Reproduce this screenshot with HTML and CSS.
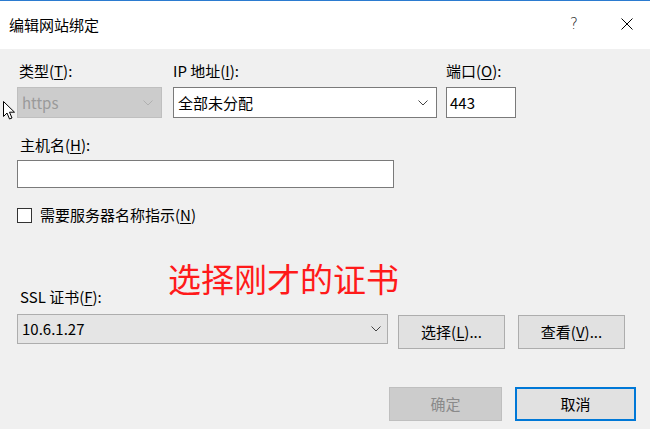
FILE: index.html
```html
<!DOCTYPE html>
<html lang="zh-CN">
<head>
<meta charset="utf-8">
<title>编辑网站绑定</title>
<link rel="stylesheet" href="styles.css">
</head>
<body>
<div class="window">
  <div class="titlebar">
    <span class="title">编辑网站绑定</span>
    <span class="help">?</span>
    <span class="close">
      <svg width="12" height="12" viewBox="0 0 12 12"><path d="M0.5 0.5 L11.5 11.5 M11.5 0.5 L0.5 11.5" stroke="#000" stroke-width="1" fill="none"/></svg>
    </span>
  </div>
  <div class="content">
    <div class="row1">
      <div class="col col-type">
        <div class="label">类型(<u>T</u>):</div>
        <div class="combo disabled"><span class="val">https</span><svg class="chev" width="10" height="6" viewBox="0 0 10 6"><path d="M0.5 0.5 L5 5 L9.5 0.5" stroke="#b0b0b0" fill="none"/></svg></div>
      </div>
      <div class="col col-ip">
        <div class="label">IP 地址(<u>I</u>):</div>
        <div class="combo editable"><span class="val">全部未分配</span><svg class="chev" width="10" height="6" viewBox="0 0 10 6"><path d="M0.5 0.5 L5 5 L9.5 0.5" stroke="#444" fill="none"/></svg></div>
      </div>
      <div class="col col-port">
        <div class="label">端口(<u>O</u>):</div>
        <div class="textbox port"><span class="val">443</span></div>
      </div>
    </div>
    <div class="label host-label">主机名(<u>H</u>):</div>
    <div class="textbox host"></div>
    <div class="check-row">
      <span class="checkbox"></span>
      <span class="check-text">需要服务器名称指示(<u>N</u>)</span>
    </div>
    <div class="label ssl-label">SSL 证书(<u>F</u>):</div>
    <div class="ssl-row">
      <div class="combo ssl"><span class="val">10.6.1.27</span><svg class="chev" width="10" height="6" viewBox="0 0 10 6"><path d="M0.5 0.5 L5 5 L9.5 0.5" stroke="#444" fill="none"/></svg></div>
      <button class="btn btn-select">选择(<u>L</u>)...</button>
      <button class="btn btn-view">查看(<u>V</u>)...</button>
    </div>
    <div class="footer">
      <button class="btn btn-ok" disabled>确定</button>
      <button class="btn btn-cancel">取消</button>
    </div>
  </div>
  <div class="annotation">选择刚才的证书</div>
  <svg class="cursor" width="14" height="20" viewBox="0 0 14 20"><path d="M0.5 0.5 L0.5 15.5 L4 12 L6.5 18 L9 17 L6.5 11.2 L11.5 11.2 Z" fill="#fff" stroke="#000" stroke-width="1" stroke-linejoin="miter"/></svg>
</div>
</body>
</html>
```
FILE: styles.css
```css
* { box-sizing: border-box; }
html, body { margin: 0; padding: 0; }
body {
  font-family: "Noto Sans CJK SC", "Noto Sans", sans-serif;
  font-size: 15px;
  color: #000;
  background: #f0f0f0;
}
u { text-decoration: underline; text-underline-offset: 2px; text-decoration-thickness: 1px; }
.window {
  position: relative;
  width: 650px;
  height: 429px;
  background: #f0f0f0;
  overflow: hidden;
}
.titlebar {
  height: 49px;
  background: #fff;
  border-top: 1px solid #2b7bd0;
  display: flex;
  align-items: center;
  padding-left: 9px;
}
.title { flex: 1; font-size: 15px; line-height: 20px; margin-top: -1px; }
.help {
  width: 12px;
  font-family: "DejaVu Sans", sans-serif;
  font-weight: 300;
  font-size: 15px;
  color: #222;
  margin-right: 39px;
  margin-top: -2px;
}
.close { width: 12px; height: 12px; margin-right: 17px; margin-top: -2px; display: flex; }
.content { padding-left: 17px; }
.label { line-height: 20px; height: 20px; white-space: nowrap; }
.row1 { display: flex; margin-top: 12px; }
.col .label { margin-bottom: 6px; }
.col-type { width: 145px; }
.col-type .label { padding-left: 2px; }
.col-ip { width: 264px; margin-left: 11px; }
.col-port { width: 70px; margin-left: 9px; }
.combo, .textbox {
  height: 31px;
  display: flex;
  align-items: center;
  padding-left: 4px;
  padding-right: 8px;
}
.val { flex: 1; line-height: 20px; }
.chev { flex: none; }
.combo.disabled { background: #cccccc; border: 1px solid #bfbfbf; color: #9a9a9a; }
.combo.editable { background: #fff; border: 1px solid #7a7a7a; }
.textbox { background: #fff; border: 1px solid #7a7a7a; }
.textbox.port { padding-left: 3px; }
.host-label { margin-top: 17px; padding-left: 3px; }
.textbox.host { width: 377px; height: 28px; margin-top: 5px; }
.check-row { display: flex; align-items: center; margin-top: 17px; height: 20px; }
.checkbox {
  width: 15px; height: 15px;
  border: 1px solid #333;
  background: #fff;
  margin-right: 8px;
}
.check-text { line-height: 20px; }
.ssl-label { margin-top: 62px; padding-left: 3px; }
.ssl-row { display: flex; align-items: flex-start; margin-top: 7px; }
.combo.ssl {
  width: 371px; height: 30px;
  background: #e5e5e5;
  border: 1px solid #adadad;
  padding-right: 6px;
}
.btn {
  font-family: inherit;
  font-size: 15px;
  color: #000;
  background: #e1e1e1;
  border: 1px solid #adadad;
  padding: 0;
  height: 34px;
  line-height: 20px;
}
.btn-select { width: 107px; margin-left: 10px; margin-top: 1px; }
.btn-view { width: 107px; margin-left: 13px; margin-top: 1px; }
.footer { display: flex; justify-content: flex-end; padding-right: 14px; margin-top: 38px; }
.btn-ok { width: 113px; background: #cccccc; border-color: #bfbfbf; color: #8a8a8a; }
.btn-cancel { width: 121px; margin-left: 13px; border: 2px solid #0078d7; }
.annotation {
  position: absolute;
  left: 168px;
  top: 260px;
  font-size: 33px;
  line-height: 36px;
  color: #ff1a1a;
  white-space: nowrap;
}
.cursor { position: absolute; left: 3px; top: 101px; }
```
